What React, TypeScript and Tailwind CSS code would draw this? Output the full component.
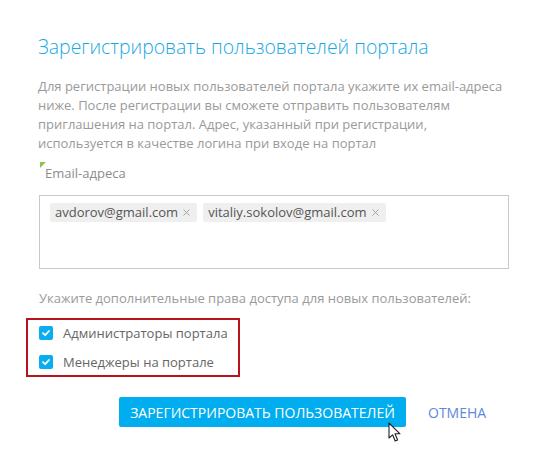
import React from 'react';

const EMAILS = ['avdorov@gmail.com', 'vitaliy.sokolov@gmail.com'];
const ROLES = ['Администраторы портала', 'Менеджеры на портале'];

const Check: React.FC = () => (
  <span className="flex h-[14px] w-[14px] items-center justify-center rounded-[2px] bg-[#0aaef0]">
    <svg width="10" height="10" viewBox="0 0 10 10" fill="none">
      <path d="M2 5.2 L4.2 7.2 L8 3" stroke="#fff" strokeWidth="1.8" strokeLinecap="round" strokeLinejoin="round" />
    </svg>
  </span>
);

export default function App() {
  return (
    <div className="relative h-[455px] w-[548px] bg-white font-['Open_Sans',sans-serif]">
      <div className="pl-[38px] pr-[39px] pt-[33px]">
        <h1 className="text-[19.4px] font-light leading-[28px] text-[#16a8e4]">
          Зарегистрировать пользователей портала
        </h1>
        <p className="mt-[16px] text-[13px] leading-[19px] text-[#9a9a9a]">
          Для регистрации новых пользователей портала укажите их email-адреса
          <br />
          ниже. После регистрации вы сможете отправить пользователям
          <br />
          приглашения на портал. Адрес, указанный при регистрации,
          <br />
          используется в качестве логина при входе на портал
        </p>

        <div className="relative mt-[11px] pl-[7px] text-[13px] leading-[19px] text-[#8c8c8c]">
          <span className="absolute left-[2px] top-[-2px] h-0 w-0 border-r-[6px] border-t-[6px] border-r-transparent border-t-[#8cc63e]" />
          Email-адреса
        </div>

        <div className="ml-[1px] mt-[12px] h-[74px] w-[470px] border border-[#c8c8c8] px-[10px] pt-[7px]">
          <div className="flex gap-[6px]">
            {EMAILS.map((e) => (
              <span
                key={e}
                className="flex h-[19px] items-center rounded-[2px] bg-[#efefef] pl-[5px] pr-[7px] text-[13px] text-[#555]"
              >
                {e}
                <svg className="ml-[5px]" width="7" height="7" viewBox="0 0 7 7">
                  <path d="M0.5 0.5 L6.5 6.5 M6.5 0.5 L0.5 6.5" stroke="#9a9a9a" strokeWidth="0.9" />
                </svg>
              </span>
            ))}
          </div>
        </div>

        <p className="ml-[1px] mt-[20px] text-[13px] leading-[19px] text-[#9a9a9a]">
          Укажите дополнительные права доступа для новых пользователей:
        </p>

        <div className="ml-[-12px] mt-[10px] flex h-[59px] w-[214px] flex-col justify-center gap-[13px] border-2 border-[#b8121b] pl-[11px]">
          {ROLES.map((r) => (
            <label key={r} className="flex items-center gap-[10px] text-[13px] leading-[16px] text-[#666]">
              <Check />
              {r}
            </label>
          ))}
        </div>

        <div className="ml-[81px] mt-[20px] flex items-center gap-[22px]">
          <button className="h-[30px] w-[287px] rounded-[2px] bg-[#00adef] text-[14px] text-white">
            ЗАРЕГИСТРИРОВАТЬ ПОЛЬЗОВАТЕЛЕЙ
          </button>
          <button className="text-[14px] text-[#5e88d8]">ОТМЕНА</button>
        </div>
      </div>

      <svg className="absolute left-[388px] top-[422px]" width="16" height="22" viewBox="0 0 16 22">
        <path
          d="M1 1 L1 16 L4.6 12.8 L7.2 19 L9.6 18 L7 11.8 L12 11.8 Z"
          fill="#fff"
          stroke="#222"
          strokeWidth="1.1"
          strokeLinejoin="round"
        />
      </svg>
    </div>
  );
}
